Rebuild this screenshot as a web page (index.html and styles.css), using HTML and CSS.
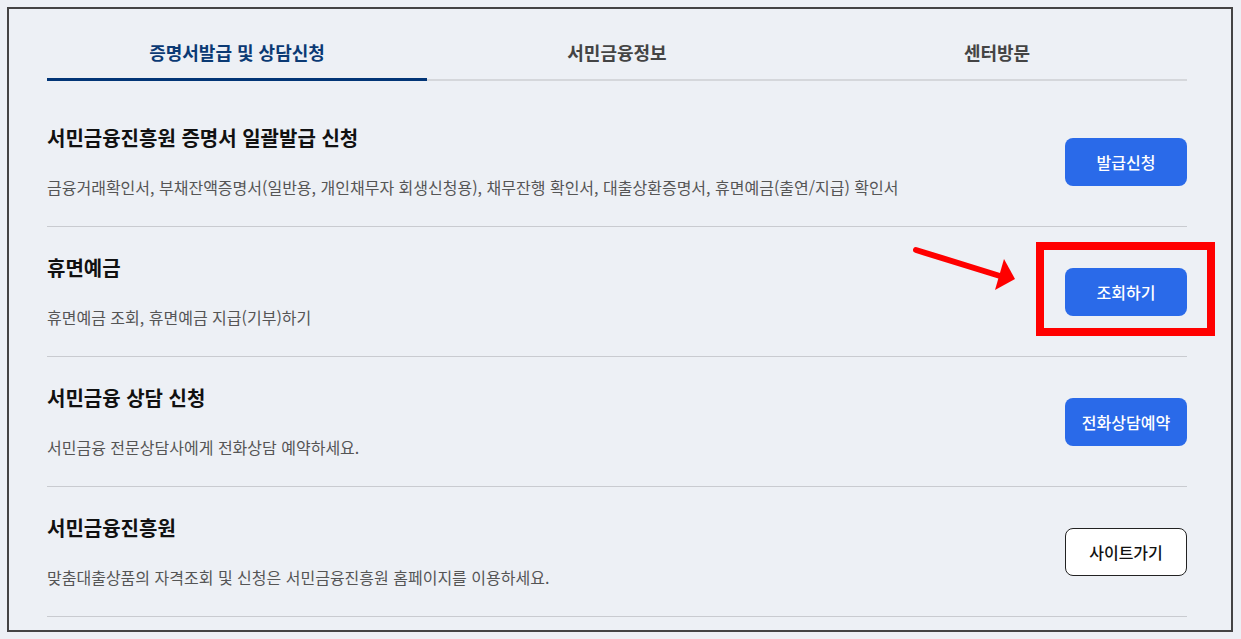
FILE: index.html
```html
<!DOCTYPE html>
<html lang="ko">
<head>
    <meta charset="UTF-8">
    <meta name="viewport" content="width=device-width, initial-scale=1.0">
    <title>서민금융 서비스</title>
    <link rel="stylesheet" href="styles.css">
</head>
<body>
    <div class="frame">
        <div class="tabs">
            <a href="#" class="tab active">증명서발급 및 상담신청</a>
            <a href="#" class="tab">서민금융정보</a>
            <a href="#" class="tab">센터방문</a>
        </div>
        <ul class="list">
            <li class="item">
                <div class="info">
                    <h3>서민금융진흥원 증명서 일괄발급 신청</h3>
                    <p>금융거래확인서, 부채잔액증명서(일반용, 개인채무자 회생신청용), 채무잔행 확인서, 대출상환증명서, 휴면예금(출연/지급) 확인서</p>
                </div>
                <a href="#" class="btn">발급신청</a>
            </li>
            <li class="item">
                <div class="info">
                    <h3>휴면예금</h3>
                    <p>휴면예금 조회, 휴면예금 지급(기부)하기</p>
                </div>
                <a href="#" class="btn">조회하기</a>
            </li>
            <li class="item">
                <div class="info">
                    <h3>서민금융 상담 신청</h3>
                    <p>서민금융 전문상담사에게 전화상담 예약하세요.</p>
                </div>
                <a href="#" class="btn">전화상담예약</a>
            </li>
            <li class="item">
                <div class="info">
                    <h3>서민금융진흥원</h3>
                    <p>맞춤대출상품의 자격조회 및 신청은 서민금융진흥원 홈페이지를 이용하세요.</p>
                </div>
                <a href="#" class="btn btn-line">사이트가기</a>
            </li>
        </ul>
        <!-- annotation over the screenshot -->
        <div class="mark"></div>
        <svg class="arrow" width="120" height="60" viewBox="0 0 120 60">
            <line x1="16" y1="10" x2="100" y2="36" stroke="#ff0000" stroke-width="6" stroke-linecap="round"/>
            <polygon points="104,19 115,39 95,50" fill="#ff0000"/>
        </svg>
    </div>
</body>
</html>
```

FILE: styles.css
```css
body {
    margin: 0;
    background: #edf0f5;
    font-family: "Noto Sans CJK KR", "Noto Sans", sans-serif;
}
.frame {
    position: relative;
    box-sizing: border-box;
    width: 1226px;
    height: 625px;
    margin: 7px 0 0 7px;
    padding: 31px 44px 0 38px;
    border: 2px solid #444;
    overflow: hidden;
}
.tabs {
    display: grid;
    grid-template-columns: repeat(3, 1fr);
    border-bottom: 2px solid #d5d7db;
}
.tab {
    display: block;
    text-align: center;
    font-size: 18px;
    line-height: 24px;
    font-weight: 700;
    color: #444;
    text-decoration: none;
    padding-bottom: 14px;
    border-bottom: 3px solid transparent;
    margin-bottom: -2px;
}
.tab.active {
    color: #0b3a74;
    border-bottom-color: #023576;
}
.list {
    list-style: none;
    margin: 16px 0 0;
    padding: 0;
}
.item {
    display: flex;
    align-items: center;
    justify-content: space-between;
    padding: 28px 0 27px;
    border-bottom: 1px solid #c9cbd0;
}
.info h3 {
    margin: 0;
    font-size: 20px;
    line-height: 26px;
    font-weight: 700;
    color: #111;
}
.info p {
    margin: 24px 0 0;
    font-size: 16px;
    line-height: 24px;
    color: #555;
}
.btn {
    display: flex;
    align-items: center;
    justify-content: center;
    box-sizing: border-box;
    width: 122px;
    height: 48px;
    border-radius: 8px;
    background: #2a6ae9;
    color: #fff;
    font-size: 16px;
    font-weight: 500;
    text-decoration: none;
}
.btn-line {
    background: #fff;
    border: 1px solid #222;
    color: #111;
}
.mark {
    position: absolute;
    left: 1027px;
    top: 233px;
    box-sizing: border-box;
    width: 179px;
    height: 94px;
    border: 8px solid #ff0000;
}
.arrow {
    position: absolute;
    left: 891px;
    top: 231px;
}
```
